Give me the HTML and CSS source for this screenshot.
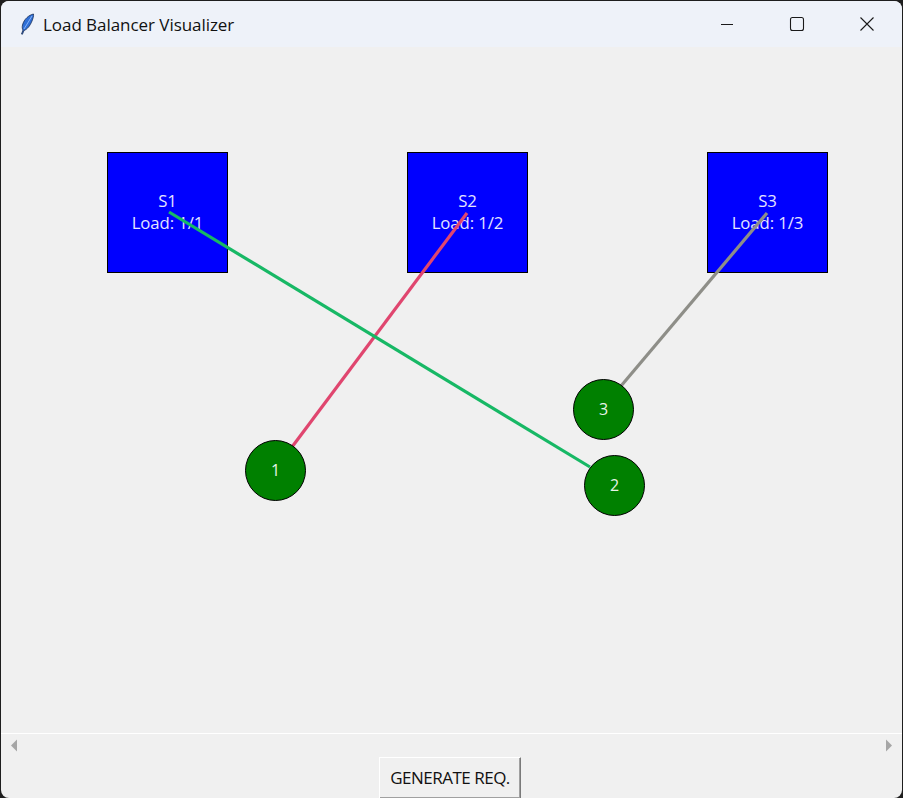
FILE: index.html
```html
<!DOCTYPE html>
<html>
<head>
<meta charset="utf-8">
<title>Load Balancer Visualizer</title>
<link rel="stylesheet" href="styles.css">
</head>
<body>
<div class="window">
  <div class="titlebar">
    <svg class="app-icon" width="16" height="22" viewBox="0 0 16 22">
      <path d="M14.5 1 C10 2 5 6 3.5 12 C3 14 3.2 16 4 17 L2.5 21 L3.4 21.3 L5 17.5 C8 16.5 11 13 13 8 C14 5.5 14.8 3 14.5 1 Z" fill="#2f6fd6" stroke="#1b2f55" stroke-width="0.8"/>
      <path d="M13 3 L5 16" stroke="#9cc4ff" stroke-width="0.8"/>
    </svg>
    <span class="title">Load Balancer Visualizer</span>
    <div class="controls">
      <span class="ctl"><svg width="16" height="16" viewBox="0 0 16 16"><path d="M2 8.5 H14" stroke="#1a1a1a" stroke-width="1"/></svg></span>
      <span class="ctl"><svg width="16" height="16" viewBox="0 0 16 16"><rect x="1.5" y="1.5" width="13" height="13" rx="2" fill="none" stroke="#1a1a1a" stroke-width="1.1"/></svg></span>
      <span class="ctl"><svg width="16" height="16" viewBox="0 0 16 16"><path d="M1.5 1.5 L14.5 14.5 M14.5 1.5 L1.5 14.5" stroke="#1a1a1a" stroke-width="1.1"/></svg></span>
    </div>
  </div>
  <svg class="canvas" width="901" height="686" viewBox="1 47 901 686">
    <rect x="107.5" y="152.5" width="120" height="120" fill="#0000ff" stroke="#000" stroke-width="1"/>
    <rect x="407.5" y="152.5" width="120" height="120" fill="#0000ff" stroke="#000" stroke-width="1"/>
    <rect x="707.5" y="152.5" width="120" height="120" fill="#0000ff" stroke="#000" stroke-width="1"/>
    <g class="srv-text" text-anchor="middle">
      <text x="167.5" y="207">S1</text>
      <text x="167.5" y="229">Load: 1/1</text>
      <text x="467.5" y="207">S2</text>
      <text x="467.5" y="229">Load: 1/2</text>
      <text x="767.5" y="207">S3</text>
      <text x="767.5" y="229">Load: 1/3</text>
    </g>
    <line x1="767" y1="213" x2="621" y2="386" stroke="#8e8e88" stroke-width="3.2"/>
    <line x1="467" y1="213" x2="292" y2="447" stroke="#e0466f" stroke-width="3.2"/>
    <line x1="169" y1="212" x2="590" y2="467" stroke="#17b865" stroke-width="3.2"/>
    <circle cx="275.5" cy="470.5" r="30" fill="#008000" stroke="#000" stroke-width="1"/>
    <circle cx="603.5" cy="409.5" r="30" fill="#008000" stroke="#000" stroke-width="1"/>
    <circle cx="614.5" cy="485.5" r="30" fill="#008000" stroke="#000" stroke-width="1"/>
    <g class="req-text" text-anchor="middle">
      <text x="275.5" y="476">1</text>
      <text x="603.5" y="415">3</text>
      <text x="614.5" y="491">2</text>
    </g>
  </svg>
  <div class="scrollbar">
    <svg width="8" height="13" viewBox="0 0 8 13"><path d="M7 0.5 L1 6.5 L7 12.5 Z" fill="#a6a6a6"/></svg>
    <svg width="8" height="13" viewBox="0 0 8 13"><path d="M1 0.5 L7 6.5 L1 12.5 Z" fill="#a6a6a6"/></svg>
  </div>
  <div class="button-row">
    <button class="gen-btn">GENERATE REQ.</button>
  </div>
</div>
</body>
</html>
```

FILE: styles.css
```css
html, body {
  margin: 0;
  padding: 0;
  background: #1e1e1e;
  width: 903px;
  height: 798px;
  overflow: hidden;
}
.window {
  margin: 1px 1px 0 1px;
  width: 901px;
  height: 797px;
  border-radius: 8px;
  overflow: hidden;
  background: #f0f0f0;
  display: flex;
  flex-direction: column;
  font-family: "Open Sans", "Noto Sans", sans-serif;
}
.titlebar {
  height: 46px;
  flex: none;
  background: #eef2f9;
  display: flex;
  align-items: center;
  padding-left: 18px;
}
.app-icon {
  flex: none;
}
.title {
  margin-left: 8px;
  font-size: 17px;
  color: #111;
  letter-spacing: -0.05px;
}
.controls {
  margin-left: auto;
  display: flex;
  height: 100%;
}
.ctl {
  width: 70px;
  display: flex;
  align-items: center;
  justify-content: center;
}
.ctl svg {
  width: 16px;
  height: 16px;
}
.canvas {
  display: block;
  flex: none;
  border-bottom: 1px solid #ffffff;
}
.srv-text text {
  font-family: "Open Sans", "Noto Sans", sans-serif;
  font-size: 16.8px;
  letter-spacing: -0.1px;
  fill: #e4e4ff;
}
.req-text text {
  font-family: "Open Sans", "Noto Sans", sans-serif;
  font-size: 16px;
  fill: #e8f4e8;
}
.scrollbar {
  height: 23px;
  flex: none;
  display: flex;
  align-items: center;
  justify-content: space-between;
  padding: 0 9px;
}
.button-row {
  display: flex;
  justify-content: center;
}
.gen-btn {
  width: 142px;
  height: 42px;
  margin: 0 3px 0 0;
  padding: 0 0 2px 0;
  background: #f0f0f0;
  border: 1px solid;
  border-color: #ffffff #7a7a7a #7a7a7a #ffffff;
  box-shadow: inset -1px -1px 0 #a0a0a0;
  font-family: "Open Sans", "Noto Sans", sans-serif;
  font-size: 17px;
  letter-spacing: -0.5px;
  color: #111;
  text-align: center;
}
```
